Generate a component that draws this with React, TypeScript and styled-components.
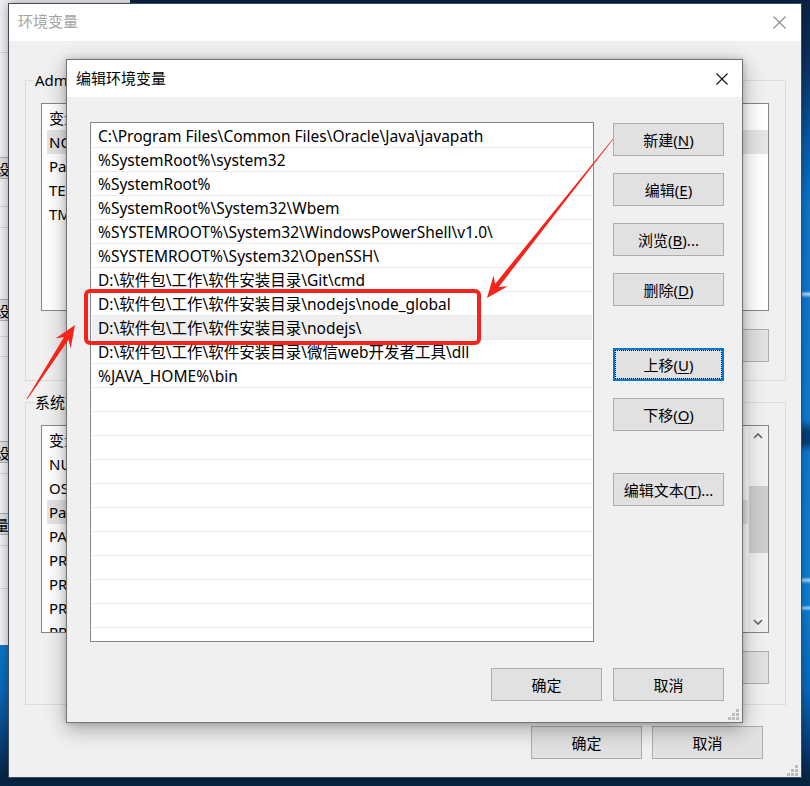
import React from "react";
import styled, { createGlobalStyle } from "styled-components";

const FONT = `"Segoe UI", "Noto Sans", "Noto Sans CJK SC", sans-serif`;

const GlobalStyle = createGlobalStyle`
  html, body { margin: 0; padding: 0; }
  body { font-family: ${FONT}; width: 810px; height: 786px; overflow: hidden; background: #0a2a50; }
`;

const Desktop = styled.div`
  position: relative;
  width: 810px;
  height: 786px;
  overflow: hidden;
  background:
    linear-gradient(to bottom, transparent 0, transparent 291px, rgba(200, 232, 255, 0.9) 294px, transparent 298px),
    linear-gradient(to bottom, transparent 0, transparent 577px, rgba(200, 232, 255, 0.85) 580px, transparent 584px),
    linear-gradient(to bottom, transparent 0, transparent 605px, rgba(200, 232, 255, 0.8) 608px, transparent 611px),
    linear-gradient(
      to bottom,
      #0a2346 0px,
      #0c3463 70px,
      #0b5aa6 140px,
      #0b78d2 210px,
      #0b7ed8 420px,
      #0a3d73 432px,
      #0a3d73 442px,
      #0b7bd5 452px,
      #0a82db 600px,
      #0a68ba 690px,
      #0a3e76 745px,
      #082545 778px
    );
`;

/* ---------- left window peeking out ---------- */

const LeftWindow = styled.div`
  position: absolute;
  left: -122px;
  top: -12px;
  width: 252px;
  height: 657px;
  background: #f0f0f0;
  display: flex;
  flex-direction: column;
  font-family: ${FONT};
  font-size: 15px;
`;

const StubLine = styled.div<{ $mt: number }>`
  margin-top: ${(p) => p.$mt}px;
  height: 1px;
  background: #d4d4d4;
  flex: none;
`;

const StubButton = styled.div<{ $mt: number; $pr?: number }>`
  margin-top: ${(p) => p.$mt}px;
  margin-left: 40px;
  width: 112px;
  height: 22px;
  box-sizing: border-box;
  flex: none;
  background: #e1e1e1;
  border: 1px solid #adadad;
  display: flex;
  align-items: center;
  justify-content: flex-end;
  padding-right: ${(p) => p.$pr ?? 4}px;
  white-space: nowrap;
  color: #000;
`;

/* ---------- windows ---------- */

const BackWindow = styled.div`
  position: absolute;
  left: 8px;
  top: 3px;
  width: 794px;
  height: 775px;
  box-sizing: border-box;
  border: 1px solid #3f4b58;
  background: #f0f0f0;
  display: flex;
  flex-direction: column;
  font-family: ${FONT};
  font-size: 15px;
  color: #000;
  box-shadow: 0 0 10px rgba(0, 0, 0, 0.35);
`;

const FrontWindow = styled.div`
  position: absolute;
  left: 66px;
  top: 59px;
  width: 677px;
  height: 664px;
  box-sizing: border-box;
  border: 1px solid #747474;
  background: #f0f0f0;
  display: flex;
  flex-direction: column;
  font-family: ${FONT};
  font-size: 15px;
  color: #000;
  box-shadow: 0 6px 20px rgba(0, 0, 0, 0.32), 0 0 6px rgba(0, 0, 0, 0.18);
`;

const TitleBar = styled.div<{ $inactive?: boolean }>`
  flex: none;
  height: 37px;
  background: #fff;
  display: flex;
  align-items: center;
  justify-content: space-between;
  padding-left: 9px;
  color: ${(p) => (p.$inactive ? "#a3a3a3" : "#000")};
  font-size: 15px;
`;

const TitleText = styled.span<{ $up?: number }>`
  line-height: 1;
  margin-bottom: ${(p) => p.$up ?? 0}px;
`;

const CloseBox = styled.div<{ $w: number }>`
  width: ${(p) => p.$w}px;
  height: 37px;
  display: flex;
  align-items: center;
  justify-content: center;
`;

const Grip = styled.svg<{ $r: number; $b: number }>`
  position: absolute;
  right: ${(p) => p.$r}px;
  bottom: ${(p) => p.$b}px;
`;

/* ---------- back dialog content ---------- */

const BackBody = styled.div`
  flex: 1;
  display: flex;
  flex-direction: column;
  padding: 39px 15px 0 16px;
`;

const GroupBox = styled.div<{ $mt?: number; $pb: number }>`
  position: relative;
  margin-top: ${(p) => p.$mt ?? 0}px;
  border: 1px solid #dcdcdc;
  padding: 22px 16px ${(p) => p.$pb}px 15px;
  display: flex;
  flex-direction: column;
  gap: 18px;
`;

const Legend = styled.span`
  position: absolute;
  left: 8px;
  top: -11px;
  background: #f0f0f0;
  padding: 0 1px;
  line-height: 20px;
  white-space: nowrap;
`;

const VarList = styled.div`
  height: 208px;
  box-sizing: border-box;
  border: 1px solid #828790;
  background: #fff;
  display: flex;
  overflow: hidden;
`;

const VarColumn = styled.div`
  flex: 1;
  display: flex;
  flex-direction: column;
  overflow: hidden;
`;

const VarHeader = styled.div`
  flex: none;
  height: 26px;
  display: flex;
  align-items: center;
  padding-left: 7px;
  white-space: nowrap;
`;

const VarRow = styled.div<{ $sel?: boolean }>`
  flex: none;
  height: 24px;
  margin-left: 5px;
  padding-left: 2px;
  display: flex;
  align-items: center;
  white-space: nowrap;
  background: ${(p) => (p.$sel ? "#e5e5e5" : "transparent")};
`;

const ScrollBar = styled.div`
  flex: none;
  width: 20px;
  background: #f0f0f0;
  display: flex;
  flex-direction: column;
  align-items: center;
`;

const ScrollArrow = styled.div`
  height: 20px;
  width: 20px;
  display: flex;
  align-items: center;
  justify-content: center;
  flex: none;
`;

const ScrollTrack = styled.div`
  flex: 1;
  width: 100%;
  display: flex;
  flex-direction: column;
  align-items: center;
`;

const ScrollThumb = styled.div`
  margin-top: 40px;
  width: 19px;
  height: 67px;
  background: #cdcdcd;
`;

const ButtonRow = styled.div<{ $gap: number; $pr?: number; $mt?: number }>`
  display: flex;
  justify-content: flex-end;
  gap: ${(p) => p.$gap}px;
  padding-right: ${(p) => p.$pr ?? 0}px;
  margin-top: ${(p) => p.$mt ?? 0}px;
`;

const Button = styled.button<{ $focused?: boolean }>`
  position: relative;
  width: 111px;
  height: 33px;
  box-sizing: border-box;
  flex: none;
  margin: 0;
  padding: 0;
  background: #e1e1e1;
  border: ${(p) => (p.$focused ? "2px solid #0078d7" : "1px solid #adadad")};
  font-family: ${FONT};
  font-size: 15px;
  color: #000;
  display: flex;
  align-items: center;
  justify-content: center;
  white-space: nowrap;
  &::after {
    content: "";
    display: ${(p) => (p.$focused ? "block" : "none")};
    position: absolute;
    inset: 0;
    border: 1px dotted #000;
  }
  u {
    text-decoration-thickness: 1px;
    text-underline-offset: 2px;
  }
`;

/* ---------- front dialog content ---------- */

const FrontBody = styled.div`
  flex: 1;
  display: grid;
  grid-template-columns: 504px 111px;
  grid-template-rows: 520px auto;
  column-gap: 19px;
  row-gap: 26px;
  padding: 25px 18px 21px 23px;
`;

const PathList = styled.div`
  box-sizing: border-box;
  border: 1px solid #828790;
  background: #fff;
  padding: 1px 1px 0;
  overflow: hidden;
  display: flex;
  flex-direction: column;
`;

const PathRow = styled.div<{ $hl?: boolean }>`
  flex: none;
  height: 24px;
  box-sizing: border-box;
  border-bottom: 1px solid #ebebeb;
  padding-left: 6px;
  display: flex;
  align-items: center;
  white-space: nowrap;
  font-size: 15.5px;
  background: ${(p) => (p.$hl ? "#efefef" : "transparent")};
`;

const SideColumn = styled.div`
  display: flex;
  flex-direction: column;
  gap: 42px;
  padding-top: 1px;
`;

const SideGroup = styled.div`
  display: flex;
  flex-direction: column;
  gap: 17px;
`;

const FooterRow = styled.div`
  grid-column: 1 / span 2;
  display: flex;
  justify-content: flex-end;
  gap: 11px;
`;

const Overlay = styled.svg`
  position: absolute;
  left: 0;
  top: 0;
  pointer-events: none;
`;

/* ---------- helpers ---------- */

const CloseIcon = ({ color, size }: { color: string; size: number }) => (
  <svg width={size} height={size} viewBox={`0 0 ${size} ${size}`}>
    <path d={`M0.5 0.5 L${size - 0.5} ${size - 0.5} M${size - 0.5} 0.5 L0.5 ${size - 0.5}`} stroke={color} strokeWidth="1.1" fill="none" />
  </svg>
);

const GripIcon = ({ r, b }: { r: number; b: number }) => (
  <Grip $r={r} $b={b} width="12" height="12" viewBox="0 0 12 12">
    {[
      [8, 0],
      [4, 4],
      [8, 4],
      [0, 8],
      [4, 8],
      [8, 8],
    ].map(([x, y], i) => (
      <rect key={i} x={x} y={y} width="3" height="3" fill="#bcbcbc" />
    ))}
  </Grip>
);

const Chevron = ({ up }: { up?: boolean }) => (
  <svg width="10" height="6" viewBox="0 0 10 6">
    <path d={up ? "M1 5 L5 1 L9 5" : "M1 1 L5 5 L9 1"} stroke="#606060" strokeWidth="1.6" fill="none" />
  </svg>
);

function arrowPoints(tx: number, ty: number, hx: number, hy: number, headLen: number, headW: number, shaftEnd: number, shaftStart: number) {
  const dx = hx - tx;
  const dy = hy - ty;
  const L = Math.hypot(dx, dy);
  const ux = dx / L;
  const uy = dy / L;
  const nx = -uy;
  const ny = ux;
  const sx = hx - ux * (headLen - 6);
  const sy = hy - uy * (headLen - 6);
  const bx = hx - ux * headLen;
  const by = hy - uy * headLen;
  const p = (x: number, y: number) => `${x.toFixed(1)},${y.toFixed(1)}`;
  return [
    p(tx + nx * shaftStart, ty + ny * shaftStart),
    p(sx + nx * shaftEnd, sy + ny * shaftEnd),
    p(bx + nx * headW, by + ny * headW),
    p(hx, hy),
    p(bx - nx * headW, by - ny * headW),
    p(sx - nx * shaftEnd, sy - ny * shaftEnd),
    p(tx - nx * shaftStart, ty - ny * shaftStart),
  ].join(" ");
}

const PATHS = [
  "C:\\Program Files\\Common Files\\Oracle\\Java\\javapath",
  "%SystemRoot%\\system32",
  "%SystemRoot%",
  "%SystemRoot%\\System32\\Wbem",
  "%SYSTEMROOT%\\System32\\WindowsPowerShell\\v1.0\\",
  "%SYSTEMROOT%\\System32\\OpenSSH\\",
  "D:\\软件包\\工作\\软件安装目录\\Git\\cmd",
  "D:\\软件包\\工作\\软件安装目录\\nodejs\\node_global",
  "D:\\软件包\\工作\\软件安装目录\\nodejs\\",
  "D:\\软件包\\工作\\软件安装目录\\微信web开发者工具\\dll",
  "%JAVA_HOME%\\bin",
];

const USER_VARS = ["NODE_PATH", "Path", "TEMP", "TMP"];
const SYS_VARS = [
  "NUMBER_OF_PROCESSORS",
  "OS",
  "Path",
  "PATHEXT",
  "PROCESSOR_ARCHITECTURE",
  "PROCESSOR_IDENTIFIER",
  "PROCESSOR_LEVEL",
  "PROCESSOR_REVISION",
];

export default function App() {
  const emptyRows = 22 - PATHS.length;
  return (
    <>
      <GlobalStyle />
      <Desktop>
        <LeftWindow>
          <StubLine $mt={64} />
          <StubButton $mt={104}>环境变量设置</StubButton>
          <StubLine $mt={27} />
          <StubLine $mt={20} />
          <StubButton $mt={71}>环境变量设置</StubButton>
          <StubLine $mt={15} />
          <StubLine $mt={19} />
          <StubButton $mt={84}>环境变量设置</StubButton>
          <StubLine $mt={10} />
          <StubButton $mt={39} $pr={20}>变量</StubButton>
          <StubLine $mt={10} />
          <StubLine $mt={42} />
        </LeftWindow>

        <BackWindow>
          <TitleBar $inactive>
            <TitleText $up={2}>环境变量</TitleText>
            <CloseBox $w={43}>
              <CloseIcon color="#8c8c8c" size={13} />
            </CloseBox>
          </TitleBar>
          <BackBody>
            <GroupBox $pb={18}>
              <Legend>Administrator 的用户变量(U)</Legend>
              <VarList>
                <VarColumn>
                  <VarHeader>变量</VarHeader>
                  {USER_VARS.map((v, i) => (
                    <VarRow key={v} $sel={i === 0}>
                      {v}
                    </VarRow>
                  ))}
                </VarColumn>
              </VarList>
              <ButtonRow $gap={10}>
                <Button>
                  新建(<u>N</u>)...
                </Button>
                <Button>
                  编辑(<u>E</u>)...
                </Button>
                <Button>
                  删除(<u>D</u>)
                </Button>
              </ButtonRow>
            </GroupBox>
            <GroupBox $mt={21} $pb={20}>
              <Legend>系统变量(S)</Legend>
              <VarList>
                <VarColumn>
                  <VarHeader>变量</VarHeader>
                  {SYS_VARS.map((v, i) => (
                    <VarRow key={v + i} $sel={i === 2}>
                      {v}
                    </VarRow>
                  ))}
                </VarColumn>
                <ScrollBar>
                  <ScrollArrow>
                    <Chevron up />
                  </ScrollArrow>
                  <ScrollTrack>
                    <ScrollThumb />
                  </ScrollTrack>
                  <ScrollArrow>
                    <Chevron />
                  </ScrollArrow>
                </ScrollBar>
              </VarList>
              <ButtonRow $gap={10}>
                <Button>
                  新建(<u>W</u>)...
                </Button>
                <Button>
                  编辑(<u>I</u>)...
                </Button>
                <Button>
                  删除(<u>L</u>)
                </Button>
              </ButtonRow>
            </GroupBox>
            <ButtonRow $gap={10} $pr={23} $mt={21}>
              <Button>确定</Button>
              <Button>取消</Button>
            </ButtonRow>
          </BackBody>
          <GripIcon r={2} b={0} />
        </BackWindow>

        <FrontWindow>
          <TitleBar>
            <TitleText>编辑环境变量</TitleText>
            <CloseBox $w={40}>
              <CloseIcon color="#111" size={12} />
            </CloseBox>
          </TitleBar>
          <FrontBody>
            <PathList>
              {PATHS.map((p, i) => (
                <PathRow key={p} $hl={i === 8}>
                  {p}
                </PathRow>
              ))}
              {Array.from({ length: emptyRows }).map((_, i) => (
                <PathRow key={"e" + i} />
              ))}
            </PathList>
            <SideColumn>
              <SideGroup>
                <Button>
                  新建(<u>N</u>)
                </Button>
                <Button>
                  编辑(<u>E</u>)
                </Button>
                <Button>
                  浏览(<u>B</u>)...
                </Button>
                <Button>
                  删除(<u>D</u>)
                </Button>
              </SideGroup>
              <SideGroup>
                <Button $focused>
                  上移(<u>U</u>)
                </Button>
                <Button>
                  下移(<u>O</u>)
                </Button>
              </SideGroup>
              <SideGroup>
                <Button>
                  编辑文本(<u>T</u>)...
                </Button>
              </SideGroup>
            </SideColumn>
            <FooterRow>
              <Button>确定</Button>
              <Button>取消</Button>
            </FooterRow>
          </FrontBody>
          <GripIcon r={2} b={1} />
        </FrontWindow>

        <Overlay width="810" height="786" viewBox="0 0 810 786">
          <rect x="86" y="291" width="393" height="52" rx="4" ry="4" fill="none" stroke="#f5241b" strokeWidth="4" />
          <polygon points={arrowPoints(613, 139, 487, 298, 22, 9, 2.4, 0.3)} fill="#f5241b" />
          <polygon points={arrowPoints(27, 399, 75, 325, 22, 9, 2.6, 0.4)} fill="#f5241b" />
        </Overlay>
      </Desktop>
    </>
  );
}
